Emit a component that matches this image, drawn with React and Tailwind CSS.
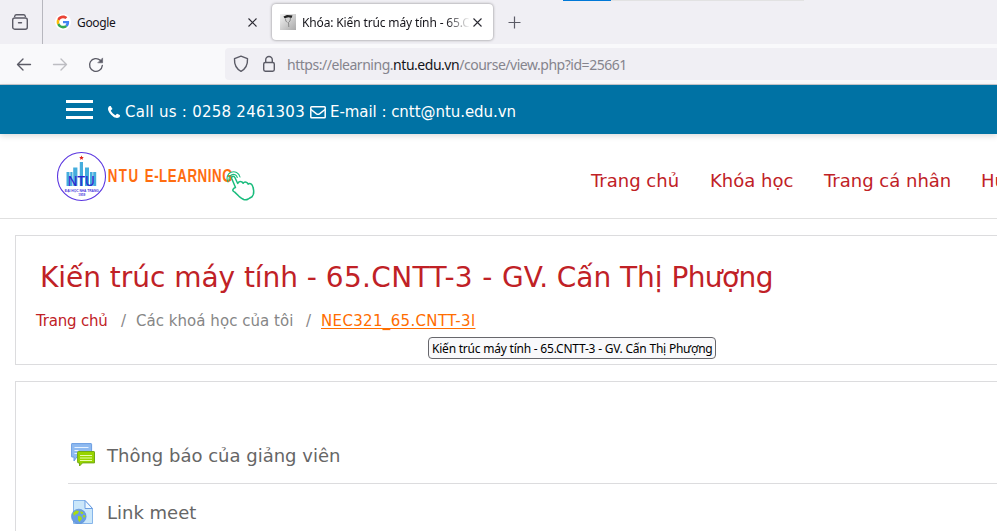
import React from "react";

const ui = "font-['Noto_Sans','Open_Sans',sans-serif]";
const site = "font-['Verdana','DejaVu_Sans',sans-serif]";

function GoogleLogo() {
  return (
    <svg width="16" height="16" viewBox="-6 -6 60 60" className="shrink-0 rounded-full bg-white">
      <path fill="#EA4335" d="M24 9.5c3.54 0 6.71 1.22 9.21 3.6l6.85-6.85C35.9 2.38 30.47 0 24 0 14.62 0 6.51 5.38 2.56 13.22l7.98 6.19C12.43 13.72 17.74 9.5 24 9.5z" />
      <path fill="#4285F4" d="M46.98 24.55c0-1.57-.15-3.09-.38-4.55H24v9.02h12.94c-.58 2.96-2.26 5.48-4.78 7.18l7.73 6c4.51-4.18 7.09-10.36 7.09-17.65z" />
      <path fill="#FBBC05" d="M10.53 28.59c-.48-1.45-.76-2.99-.76-4.59s.27-3.14.76-4.59l-7.98-6.19C.92 16.46 0 20.12 0 24c0 3.88.92 7.54 2.56 10.78l7.97-6.19z" />
      <path fill="#34A853" d="M24 48c6.48 0 11.93-2.13 15.89-5.81l-7.73-6c-2.15 1.45-4.92 2.3-8.16 2.3-6.26 0-11.57-4.22-13.47-9.91l-7.98 6.19C6.51 42.62 14.62 48 24 48z" />
    </svg>
  );
}

function Close() {
  return (
    <svg width="9" height="9" viewBox="0 0 9 9" stroke="#2b2a33" strokeWidth="1.1" className="shrink-0">
      <path d="M.5 .5l8 8M8.500 .5l-8 8" />
    </svg>
  );
}

function TabStrip() {
  return (
    <div className="relative flex h-11 bg-[#f0eff4]">
      <div className="absolute left-[563px] top-0 flex h-px w-[241px] bg-[#e2e2e2]">
        <div className="w-12 bg-[#0078d7]" />
      </div>
      <div className="flex w-[43px] border-r border-[#b7b7be] pl-3 pt-3.5">
        <svg width="16" height="16" viewBox="0 0 16 16" fill="none" stroke="#5b5b66" strokeWidth="1.4" strokeLinecap="round">
          <path d="M2.600 2.600Q3 .8 4.400 .8H11.600Q13 .8 13.400 2.600" />
          <rect x=".7" y="4" width="14.600" height="11.200" rx="2" />
          <path d="M6.500 8.800h3" />
        </svg>
      </div>
      <div className="flex w-[228px] items-center pl-3 pr-[14px]">
        <GoogleLogo />
        <span className="ml-1.5 flex-1 pt-0.5 text-[12px] tracking-[-0.35px] text-[#15141a]">Google</span>
        <Close />
      </div>
      <div className="ml-px mt-1 flex h-9 w-[221px] items-center rounded bg-white pl-2 shadow-[0_0_3px_rgba(0,0,0,0.45)]">
        <svg width="16" height="16" viewBox="0 0 16 16" className="shrink-0">
          <defs>
            <linearGradient id="fav" x1="0" y1="0" x2="1" y2="1">
              <stop offset="0" stopColor="#f4f4f4" />
              <stop offset="1" stopColor="#a9a9a9" />
            </linearGradient>
          </defs>
          <rect width="16" height="16" fill="url(#fav)" />
          <path d="M3.500 2.500L7 1l5.500.5-1 2.500-3-.7-4 .9z" fill="#222" />
          <path d="M5.500 4.500l.3 2.500 1.500 1.500M10.500 4l-.5 3-1.500 1.500.3 4.500" fill="none" stroke="#777" strokeWidth=".8" />
        </svg>
        <div className="ml-1.5 w-[168px] shrink-0 overflow-hidden whitespace-nowrap pt-0.5 text-[12px] tracking-[-0.14px] text-[#15141a] [mask-image:linear-gradient(to_right,black_144px,transparent_168px)]">
          Khóa: Kiến trúc máy tính - 65.CNTT-3
        </div>
        <div className="ml-[3px] flex">
          <Close />
        </div>
      </div>
      <svg width="13" height="13" viewBox="0 0 13 13" stroke="#5b5b66" strokeWidth="1.200" className="ml-[15px] mt-4">
        <path d="M6.500 .5v12M.5 6.500h12" />
      </svg>
    </div>
  );
}

function Toolbar() {
  return (
    <div className="flex h-[41px] items-start border-b border-[#c9c9cd] bg-[#f9f9fb]">
      <svg width="110" height="40" viewBox="0 0 110 40" fill="none" strokeWidth="1.350" strokeLinecap="round" strokeLinejoin="round" className="shrink-0">
        <path d="M17.500 20.500h13M23 15l-5.500 5.500L23 26" stroke="#5b5b66" />
        <path d="M53.500 20.500h13M61 15l5.500 5.500L61 26" stroke="#bdbdc2" />
        <path d="M102.300 21.500A6.400 6.400 0 1 1 100.300 16.300" stroke="#5b5b66" />
        <path d="M102.600 14.300v4.500h-4.500z" fill="#5b5b66" stroke="#5b5b66" strokeWidth=".6" />
      </svg>
      <div className="ml-[115px] mt-1 flex h-8 flex-1 items-center rounded-l bg-[#f0eff4] pl-2">
        <svg width="16" height="18" viewBox="0 0 16 18" fill="none" stroke="#5b5b66" strokeWidth="1.400" strokeLinejoin="round">
          <path d="M8 1.200l6.500 2.500c.3 5.500-1.400 9.800-6.500 12.600C2.900 13.500 1.200 9.200 1.500 3.700z" />
        </svg>
        <svg width="14" height="18" viewBox="0 0 14 18" fill="none" stroke="#5b5b66" strokeWidth="1.400" className="ml-[13px]">
          <rect x="1.700" y="7.500" width="10.600" height="8.700" rx="1.600" />
          <path d="M3.700 7.500V5a3.300 3.500 0 0 1 6.600 0v2.500" />
        </svg>
        <span className="ml-[11px] whitespace-nowrap pt-px text-[14px] tracking-[-0.47px] text-[#85848d]">
          https://elearning.<span className="text-[#15141a]">ntu.edu.vn</span>/course/view.php?id=25661
        </span>
      </div>
    </div>
  );
}

function ContactBar() {
  return (
    <div className="relative flex h-[49px] items-center bg-[#0072a4] pl-[66px] text-[15px] text-white shadow-[0_2px_6px_rgba(0,0,0,0.15)]">
      <div className="flex w-[27px] flex-col gap-[5px]">
        <div className="h-[3px] bg-white" />
        <div className="h-[3px] bg-white" />
        <div className="h-[3px] bg-white" />
      </div>
      <div className="flex items-center pt-[5px]">
        <svg width="12" height="12" viewBox="0 0 1408 1408" fill="currentColor" className="ml-[15px]">
          <path d="M1408 1112q0 27-10 70.500t-21 68.500q-21 50-122 106-94 51-186 51-27 0-53-3.500t-57.500-12.500-47-14.500-55.500-20.500-49-18q-98-35-175-83-127-79-264-216t-216-264q-48-77-83-175-3-9-18-49t-20.500-55.500-14.500-47T3.500 392 0 339q0-92 51-186Q107 52 157 31q25-11 68.500-21T296 0q14 0 21 3 18 6 53 76 11 19 30 54t35 63.500 31 53.500q3 4 17.500 25t21.500 35.500 7 28.500q0 20-28.500 50t-62 55-62 53-28.500 46q0 9 5 22.500t8.500 20.500 14 24 11.500 19q76 137 174 235t235 174q2 1 19 11.500t24 14 20.500 8.500 22.500 5q18 0 46-28.500t53-62 55-62 50-28.500q14 0 28.500 7t35.500 21.500 25 17.500q25 15 53.500 31t63.500 35 54 30q70 35 76 53 3 7 3 21z" />
        </svg>
        <span className="ml-[5px] w-[181px] whitespace-nowrap tracking-[0.25px]">Call us : 0258 2461303</span>
        <svg width="16" height="13" viewBox="0 0 16 13" fill="none" stroke="currentColor" strokeWidth="1.500" className="ml-1">
          <rect x=".8" y=".8" width="14.400" height="11" rx=".8" />
          <path d="M1 3.500l5.500 4.300q1.500 1.100 3 0L15 3.500" />
        </svg>
        <span className="ml-1 whitespace-nowrap tracking-[-0.05px]">E-mail : cntt@ntu.edu.vn</span>
      </div>
    </div>
  );
}

function Logo() {
  return (
    <svg width="206" height="60" viewBox="0 0 206 60" className="shrink-0">
      <circle cx="31.500" cy="32.500" r="24" fill="white" stroke="#5a35e0" strokeWidth="1.100" />
      <path d="M31.500 11.500l.7 1.500 1.600.1-1.200 1.100.4 1.600-1.500-.8-1.500.8.4-1.600-1.200-1.100 1.600-.1z" fill="#e2231a" />
      <g fill="#45addd">
        <path d="M16.500 28h3v14h-3zM20.300 28h2.200v14h-2.200zM23.200 23.500h4.200V42h-4.200zM29.800 18h3.200v24h-3.200zM35 23.500h4V42h-4zM40 28h2.600v14H40zM43.200 28h3v14h-3z" />
      </g>
      <text x="18" y="41.800" textLength="26.500" lengthAdjust="spacingAndGlyphs" fontFamily="Liberation Sans" fontSize="14" fill="#2a1fd0" stroke="#2a1fd0" strokeWidth=".2">NTU</text>
      <text x="14.800" y="47.800" textLength="34" lengthAdjust="spacingAndGlyphs" fontFamily="Liberation Sans" fontWeight="bold" fontSize="4" fill="#4a35dc">ĐẠI HỌC NHA TRANG</text>
      <text x="28.300" y="52" textLength="7" lengthAdjust="spacingAndGlyphs" fontFamily="Liberation Sans" fontWeight="bold" fontSize="3.500" fill="#4a35dc">1959</text>
      <g fontFamily="Liberation Sans" fontWeight="bold" fontSize="18.500" fill="#ff6d10">
        <text transform="translate(57.800 37.500) scale(.72 1)" textLength="42">NTU</text>
        <text transform="translate(94.700 37.500) scale(.72 1)" textLength="122">E-LEARNING</text>
      </g>
      <g fill="none" stroke="#1abc7d" strokeWidth="1.500" strokeLinecap="round" strokeLinejoin="round">
        <path d="M179.500 36.500a4.200 4.200 0 1 1 7.800-3" strokeWidth="1.100" />
        <path d="M178 38a6.600 6.600 0 1 1 12-5" strokeWidth="1.100" />
        <path d="M185.500 43.500l-3.800-9q-.4-2 1.200-2.300 1.300-.2 2 1.300l2.800 6q.8-2.300 2.900-2 2 .2 2.500 1.800 1-1.600 3-1.100 1.800.5 2 2 1.500-1.300 3.200-.1 1.200 1 1.700 3.200 1.400 4.700.3 7.200l-1.200 2.200q-1.700.8-3.900 2.300-2.200 1.400-4.500.5-2.500-1.500-4.700-3.200l-4.300-4.200q-2.500-1-1.700-2.700.9-1.500 2.500-1.900z" />
      </g>
    </svg>
  );
}

function Header() {
  return (
    <div className="flex h-[85px] border-b border-[#e0e0e0] pl-[50px] pt-[10px]">
      <Logo />
      <nav className="ml-[335px] flex whitespace-nowrap pt-[23px] text-[18px] leading-[27px] text-[#c02126]">
        <a className="w-[119px]">Trang chủ</a>
        <a className="w-[114px]">Khóa học</a>
        <a className="w-[157px]">Trang cá nhân</a>
        <a>Hướng dẫn</a>
      </nav>
    </div>
  );
}

function CourseHeading() {
  return (
    <section className="relative ml-[15px] mt-4 h-[130px] border border-r-0 border-[#dcdcde] pl-5">
      <h1 className="whitespace-nowrap pl-1 pt-[22px] text-[28px] leading-[40px] tracking-[-0.04px] text-[#c02126]">
        Kiến trúc máy tính - <span className="tracking-[0.35px]">65.CNTT-3 - </span>GV. Cấn Thị <span className="tracking-[-0.6px]">Phượng</span>
      </h1>
      <div className="mt-[11px] flex whitespace-nowrap text-[15px] leading-6 text-[#868686]">
        <a className="w-[85px] tracking-[-0.2px] text-[#c02126]">Trang chủ</a>
        <span className="w-[15px]">/</span>
        <span className="w-[170px] tracking-[0.04px]">Các khoá học của tôi</span>
        <span className="w-[15px]">/</span>
        <a className="tracking-[0.34px] text-[#ff6d00] underline underline-offset-2">NEC321_65.CNTT-3l</a>
      </div>
      <div className={`absolute left-[412px] top-[101px] flex h-[22px] w-72 items-center whitespace-nowrap rounded border border-[#67676c] bg-[#f9f9fb] pl-[3px] pt-0.5 text-[12px] tracking-[-0.22px] text-black ${ui}`}>
        Kiến trúc máy tính - 65.CNTT-3 - GV. Cấn Thị Phượng
      </div>
    </section>
  );
}

function ForumIcon() {
  return (
    <svg width="24" height="24" viewBox="0 0 24 24">
      <path d="M1 .6h19a.6.6 0 0 1 .6.6v12.600H6L3 18v-4H1a.6.6 0 0 1-.6-.6V1.200A.6.600 0 0 1 1 .6z" fill="#8fbaf0" stroke="#6b9de2" />
      <path d="M3.500 4.500h14M3.500 7.500h4M3.500 10.500h3" stroke="#e6f2ff" />
      <path d="M7.500 8.500h15.400a.6.6 0 0 1 .6.6v10.800H11.500L8.500 23v-3.100h-1a.9.900 0 0 1-.9-.9V9.400a.9.900 0 0 1 .9-.9z" fill="#98d400" stroke="#72a916" />
      <path d="M9 12.500h12M9 15h12M9 17.500h12" stroke="#e8ffad" />
    </svg>
  );
}

function UrlIcon() {
  return (
    <svg width="24" height="24" viewBox="0 0 24 24">
      <path d="M2.500.500H14l7.500 8v15h-19z" fill="#cbe7fa" stroke="#86b5ea" />
      <path d="M14 .5v8h7.500z" fill="#eef8ff" stroke="#6b9de2" />
      <circle cx="7.800" cy="16.500" r="7.300" fill="#6a9fe4" stroke="#5c8fd6" strokeWidth=".7" />
      <path d="M2 13l3-2.500 3 .5-1 2.500-2.500 1L3 16zM9.500 11l3 1.500-1 1.500-2-.5zM7 16l3 .5 1 2-2.500 3.500L7 20zM12 15l2.500.5-.5 2-2-.5z" fill="#a9dc12" />
    </svg>
  );
}

function Activity({ icon, label }) {
  return (
    <div className="flex h-[57px] items-center border-b border-[#dcdcde] pl-[3px]">
      {icon}
      <span className="ml-3 whitespace-nowrap text-[18px] text-[#666]">{label}</span>
    </div>
  );
}

export default function App() {
  return (
    <div className={`h-[531px] w-[997px] overflow-hidden bg-white ${site}`}>
      <div className={ui}>
        <TabStrip />
        <Toolbar />
      </div>
      <ContactBar />
      <Header />
      <CourseHeading />
      <section className="ml-[15px] mt-4 h-[180px] border border-r-0 border-[#dcdcde] pl-[52px] pt-[45px]">
        <Activity icon={<ForumIcon />} label="Thông báo của giảng viên" />
        <Activity icon={<UrlIcon />} label="Link meet" />
      </section>
    </div>
  );
}
